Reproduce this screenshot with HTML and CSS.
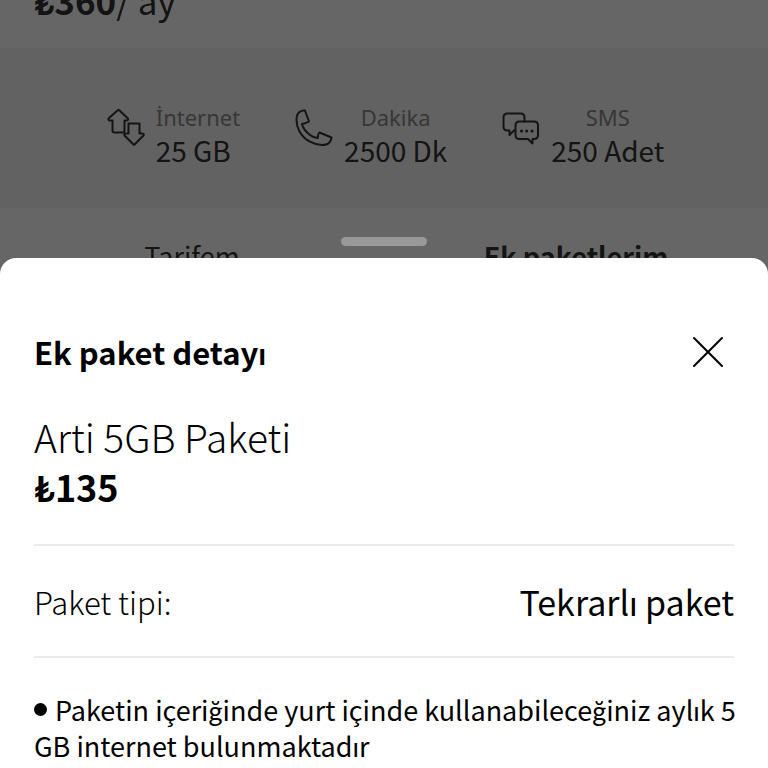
FILE: index.html
```html
<!DOCTYPE html>
<html lang="tr">
    <head>
        <meta charset="utf-8">
        <meta name="viewport" content="width=device-width, initial-scale=1">
        <title>Ek paket detayı</title>
        <link rel="stylesheet" href="styles.css">
    </head>
    <body>

        <main class="page">
            <p class="price"><b>₺360</b>/ ay</p>

            <ul class="usage">
                <li class="usage-item">
                    <svg class="usage-icon" viewBox="0 0 38 38">
                        <path d="M11 2 L1.500 10.500 Q1 12.500 3 12.500 H5.500 V22.500 Q5.500 24.500 7.500 24.500 H15.500 Q17.500 24.500 17.500 22.500 V12.500 H19.500 Q21.500 12.500 21 10.500 L12 2 Q11.500 1.500 11 2 Z"/>
                        <path d="M21.500 15.500 H32.500 V25.500 H35 Q37.500 25.500 36.500 27.500 L27.500 36.500 Q27 37 26.500 36.500 L17.500 27.500 Q16.500 25.500 19 25.500 H21.500 Z"/>
                    </svg>
                    <div class="usage-text">
                        <span class="usage-label">İnternet</span>
                        <span class="usage-value">25 GB</span>
                    </div>
                </li>
                <li class="usage-item">
                    <svg class="usage-icon" viewBox="0 0 38 38">
                        <path d="M10 2.500 Q7 2 4.500 4 Q1.500 6.500 1.500 12 Q1.500 18 4.500 23.500 Q8.500 30.500 15 33.700 Q21 37 27 37 Q32 37 34 35 Q36 33 36.500 29.500 L24.500 24.500 Q23.500 24.500 22.700 30 Q18 29.500 15 27 Q8 21.500 7 16 Q12.500 14.500 14 13.500 Z"/>
                    </svg>
                    <div class="usage-text">
                        <span class="usage-label">Dakika</span>
                        <span class="usage-value">2500 Dk</span>
                    </div>
                </li>
                <li class="usage-item">
                    <svg class="usage-icon" viewBox="0 0 38 38">
                        <path d="M13 22.500 H12 L7.500 27 V22.500 H5.500 Q1.500 22.500 1.500 18.500 V9.500 Q1.500 5.500 5.500 5.500 H18.500 Q22.500 5.500 22.500 9.500 V13.500"/>
                        <path d="M17.500 13.500 H32 Q36 13.500 36 17.500 V27 Q36 31 32 31 H30.500 V35.500 L26 31 H17.500 Q13.500 31 13.500 27 V17.500 Q13.500 13.500 17.500 13.500 Z"/>
                        <path class="dots" d="M19.500 23 H19.600 M24.700 23 H24.800 M30 23 H30.100"/>
                    </svg>
                    <div class="usage-text">
                        <span class="usage-label">SMS</span>
                        <span class="usage-value">250 Adet</span>
                    </div>
                </li>
            </ul>

            <nav class="tabs">
                <a class="tab" href="#tarifem">Tarifem</a>
                <a class="tab active" href="#ek-paketlerim">Ek paketlerim</a>
            </nav>
        </main>

        <div class="overlay">
            <div class="handle"></div>

            <section class="sheet" role="dialog" aria-labelledby="sheet-title">
                <header class="sheet-header">
                    <h1 class="sheet-title" id="sheet-title">Ek paket detayı</h1>
                    <button class="close" type="button" aria-label="Kapat">
                        <svg class="close-icon" viewBox="0 0 32 32"><path d="M2 2 L30 30 M30 2 L2 30"/></svg>
                    </button>
                </header>

                <h2 class="package-name">Arti 5GB Paketi</h2>
                <p class="package-price">₺135</p>

                <dl class="detail">
                    <dt class="detail-label">Paket tipi:</dt>
                    <dd class="detail-value">Tekrarlı paket</dd>
                </dl>

                <p class="description"><span class="bullet"></span>Paketin içeriğinde yurt içinde kullanabileceğiniz aylık 5 GB internet bulunmaktadır</p>
            </section>
        </div>

    </body>
</html>
```

FILE: styles.css
```css
* {
    box-sizing: border-box;
}

body {
    margin: 0;
    height: 100vh;
    overflow: hidden;
    background-color: white;
    color: #333;
    font-family: "Noto Sans CJK JP", Lato, sans-serif;
}

h1, h2, p, ul, dl, dd {
    margin: 0;
    padding: 0;
}

/* page behind the sheet */

.price {
    display: flex;
    align-items: flex-end;
    height: 48px;
    padding: 0 34px 28px;
    font-size: 35px;
    line-height: 40px;
    white-space: pre;
}

.usage {
    display: flex;
    justify-content: center;
    gap: 55px;
    height: 160px;
    padding: 52px 0 0 3px;
    background-color: #f4f4f4;
    list-style: none;
}

.usage-item {
    display: flex;
    gap: 11px;
}

.usage-icon {
    width: 38px;
    height: 38px;
    margin-top: 8px;
    fill: none;
    stroke: #333;
    stroke-width: 2;
    stroke-linejoin: round;
    stroke-linecap: round;
}

.usage-icon .dots {
    stroke-width: 3;
}

.usage-text {
    display: flex;
    flex-direction: column;
    align-items: center;
}

.usage-item:first-child .usage-text {
    align-items: flex-start;
}

.usage-label {
    color: #8a8a8a;
    font-family: "Noto Sans", sans-serif;
    font-size: 22px;
    line-height: 34px;
}

.usage-value {
    font-size: 28px;
    line-height: 33px;
}

.tabs {
    display: flex;
    padding-top: 28px;
}

.tab {
    flex: 1;
    color: #333;
    font-size: 27px;
    line-height: 40px;
    text-align: center;
    text-decoration: none;
}

.tab.active {
    font-weight: bold;
}

/* bottom sheet */

.overlay {
    position: fixed;
    inset: 0;
    display: flex;
    flex-direction: column;
    justify-content: flex-end;
    background-color: rgba(0, 0, 0, 0.6);
}

.handle {
    width: 86px;
    height: 9px;
    margin: 0 auto 12px;
    border-radius: 5px;
    background-color: #999;
}

.sheet {
    padding: 70px 30px 4px 34px;
    border-radius: 16px 16px 0 0;
    background-color: white;
    color: black;
}

.sheet-header {
    display: flex;
    justify-content: space-between;
    align-items: center;
    height: 48px;
}

.sheet-title {
    font-size: 31px;
    line-height: 48px;
}

.close {
    padding: 14px;
    border: none;
    background: none;
    cursor: pointer;
}

.close-icon {
    display: block;
    width: 32px;
    height: 32px;
    fill: none;
    stroke: black;
    stroke-width: 2;
    stroke-linecap: round;
}

.package-name {
    margin-top: 34px;
    font-size: 39px;
    font-weight: 300;
    line-height: 52px;
}

.package-price {
    font-size: 36px;
    font-weight: bold;
    line-height: 48px;
}

.detail {
    display: flex;
    justify-content: space-between;
    align-items: center;
    height: 114px;
    margin: 34px 4px 34px 0;
    border-top: 2px solid #ebebeb;
    border-bottom: 2px solid #ebebeb;
}

.detail-label {
    font-size: 31px;
    font-weight: 300;
}

.detail-value {
    font-size: 34px;
}

.description {
    font-size: 27px;
    line-height: 36px;
}

.bullet {
    display: inline-block;
    width: 13px;
    height: 13px;
    margin-right: 8px;
    border-radius: 50%;
    background-color: black;
    vertical-align: 5px;
}
```
